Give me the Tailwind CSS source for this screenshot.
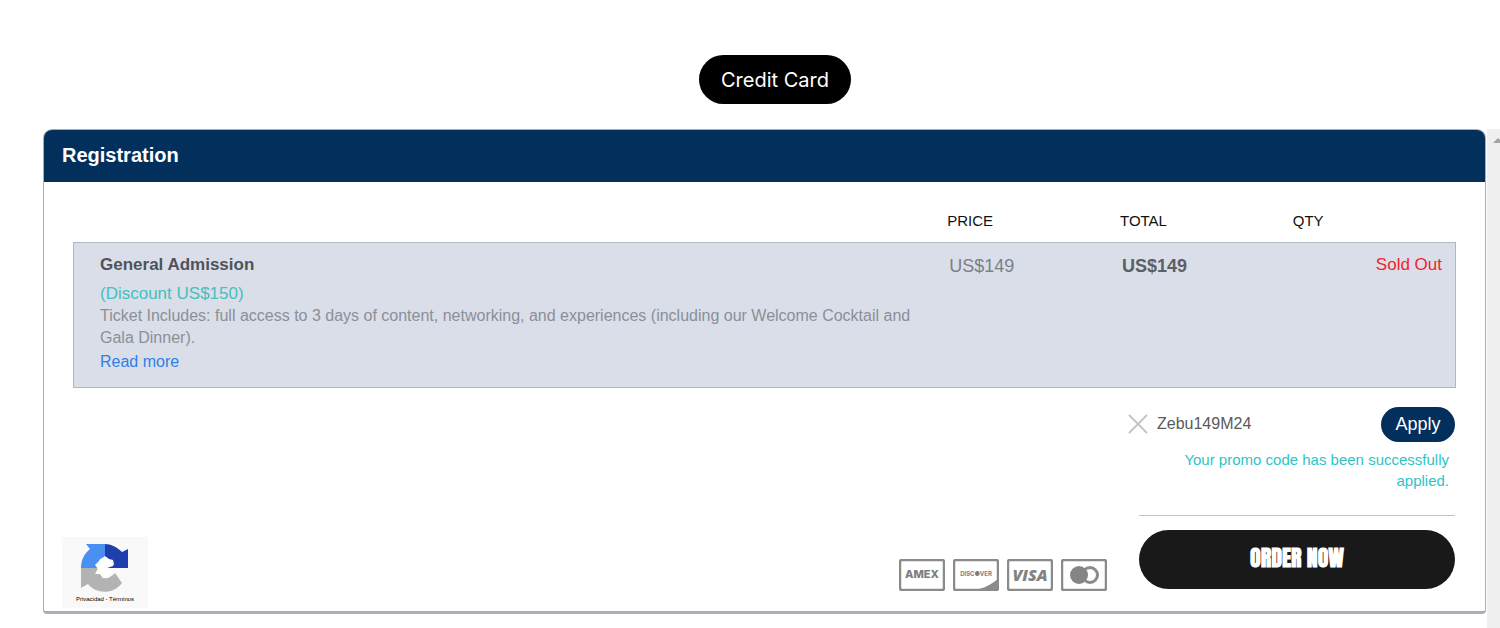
<!DOCTYPE html>
<html lang="en">
<head>
<meta charset="utf-8">
<meta name="viewport" content="width=device-width, initial-scale=1">
<title>Registration</title>
<script src="https://cdn.jsdelivr.net/npm/@tailwindcss/browser@4"></script>
</head>
<body class="flex min-h-screen flex-col bg-white font-['Liberation_Sans',Arial,sans-serif] text-[#5b5f66]">
  <header class="flex justify-center pt-[55px] pb-[25px] pl-[50px]">
    <button type="button" class="h-[49px] rounded-full bg-black px-[22px] font-[Inter,sans-serif] text-[20px] text-white">Credit Card</button>
  </header>

  <div class="flex flex-1">
    <main class="flex-1 pl-[43px]">
      <section class="flex flex-col rounded-t-[9px] rounded-b-[4px] border border-b-[3px] border-[#a9afba]">
        <h1 class="h-[52px] rounded-t-[8px] bg-[#032f5c] pl-[18px] text-[20px] leading-[50px] font-bold text-white">Registration</h1>

        <div class="px-[29px] pt-[18px]">
          <table class="w-full table-fixed border-collapse text-left">
            <thead>
              <tr class="h-[42px] text-[15px] text-[#111]">
                <td class="w-5/8"></td>
                <th scope="col" class="w-1/8 pr-2 pl-[10px] font-normal">PRICE</th>
                <th scope="col" class="w-1/8 pr-2 pl-[10px] font-normal">TOTAL</th>
                <th scope="col" class="w-1/8 pr-2 pl-[10px] font-normal">QTY</th>
              </tr>
            </thead>
            <tbody>
              <tr class="border border-[#b0b6c4] bg-[#dadee8] align-top">
                <td class="py-[10px] pr-5 pl-[26px]">
                  <h2 class="text-[17px] leading-6 font-bold text-[#4f535b]">General Admission</h2>
                  <p class="pt-[6px] text-[17px] leading-[22px] text-[#45bfbf]">(Discount US$150)</p>
                  <p class="text-[16px] leading-[22px] text-[#8b8f98]">Ticket Includes: full access to 3 days of content, networking, and experiences (including our Welcome Cocktail and Gala Dinner).</p>
                  <a href="#more" class="block pb-[2px] text-[16px] leading-[26px] text-[#2f80e8]">Read more</a>
                </td>
                <td class="px-3 py-[11px] text-[18px] leading-6 text-[#7b7f88]">US$149</td>
                <td class="px-3 py-[11px] text-[18px] leading-6 font-bold">US$149</td>
                <td class="px-[13px] py-[10px] text-right text-[17px] leading-6 text-[#f5222d]">Sold Out</td>
              </tr>
            </tbody>
          </table>
        </div>

        <div class="flex items-end pr-[30px] pb-[3px] pl-[18px]">
          <div class="flex h-[71px] w-[86px] flex-col items-center bg-[#f9f9f9] pt-[5px]">
            <svg class="h-[50px] w-[50px] shrink-0" viewBox="0 0 50 50" aria-label="reCAPTCHA">
              <path d="M25 2H6l4 5C4 12 1 18 1 26h17l-2-3 3-3 1-3 5-2z" fill="#4a90f2"/>
              <path d="M25 2c6 0 12 3 17 8l6-3v19H27l2-2 5-2-1-4-4-1-4-2z" fill="#1f3fad"/>
              <path d="M1 26h17l-2 5 4 1 3 4c5 1 8-1 12-5l7 10C32 54 15 51 8 42l-7 4z" fill="#b3b3b3"/>
              <path d="M20 18l5-4 5 4-1 3 5 1-1 2-6 2 5 4-3 5-6 1-3-4-5 0 3-5-3-4z" fill="#fff"/>
            </svg>
            <p class="pt-[3px] text-[6px] leading-[9px] text-black">Privacidad - Términos</p>
          </div>

          <div class="mb-[17px] ml-auto flex gap-2" aria-label="Accepted cards">
            <svg class="h-8 w-[46px]" viewBox="0 0 46 32" aria-label="American Express">
              <rect x="1" y="1" width="44" height="30" rx="2" fill="none" stroke="#8b8b8b" stroke-width="2.500"/>
              <text x="23" y="19" text-anchor="middle" font-family="Inter, sans-serif" font-size="11" font-weight="800" fill="#7d7d7d">AMEX</text>
            </svg>
            <svg class="h-8 w-[46px]" viewBox="0 0 46 32" aria-label="Discover">
              <path d="M45 20v11H22c9-1.500 17-6 23-11z" fill="#8b8b8b"/>
              <rect x="1" y="1" width="44" height="30" rx="2" fill="none" stroke="#8b8b8b" stroke-width="2.500"/>
              <text x="23" y="17" text-anchor="middle" font-family="Inter, sans-serif" font-size="6" font-weight="700" fill="#7d7d7d">DISC●VER</text>
            </svg>
            <svg class="h-8 w-[46px]" viewBox="0 0 46 32" aria-label="Visa">
              <rect x="1" y="1" width="44" height="30" rx="2" fill="none" stroke="#8b8b8b" stroke-width="2.500"/>
              <text x="23" y="22" text-anchor="middle" font-family="Open Sans, sans-serif" font-size="16" font-weight="800" font-style="italic" fill="#828282">VISA</text>
            </svg>
            <svg class="h-8 w-[46px]" viewBox="0 0 46 32" aria-label="Mastercard">
              <rect x="1" y="1" width="44" height="30" rx="2" fill="none" stroke="#8b8b8b" stroke-width="2.500"/>
              <circle cx="29" cy="16" r="7.500" fill="#fff" stroke="#8b8b8b" stroke-width="3"/>
              <circle cx="18" cy="16" r="9" fill="#858585"/>
            </svg>
          </div>

          <div class="ml-8 w-[316px] pt-[19px] pb-[19px]">
            <div class="-ml-[11px] flex items-center">
              <button type="button" aria-label="Remove promo code" class="shrink-0">
                <svg class="h-5 w-5" viewBox="0 0 20 20" fill="none" stroke="#c3c5c8" stroke-width="2"><path d="M1 1l18 18M19 1L1 19"/></svg>
              </button>
              <input type="text" aria-label="Promo code" value="Zebu149M24" class="ml-[9px] min-w-0 flex-1 bg-transparent text-[16px] text-[#5a5a5a] outline-none">
              <button type="button" class="h-[35px] w-[74px] shrink-0 rounded-full bg-[#032f5c] text-[18px] text-white">Apply</button>
            </div>
            <p class="ml-auto w-[280px] pt-[7px] pr-[6px] text-right text-[15px] leading-[21px] text-[#2fc3c8]">Your promo code has been successfully applied.</p>
            <hr class="mt-[24px] mb-[14px] border-[#bfc2c8]">
            <button type="button" class="h-[59px] w-full rounded-full bg-[#191919] pb-1 font-['Anton','Impact','Liberation_Sans_Narrow',sans-serif] text-[22px] font-bold text-white">ORDER NOW</button>
          </div>
        </div>
      </section>
    </main>

    <aside class="ml-px w-[13px] overflow-hidden bg-[#efefef] pt-[9px]" aria-hidden="true">
      <svg class="ml-[6px] h-[5px] w-[10px]" viewBox="0 0 10 5"><path d="M0 5l5-5 5 5z" fill="#a3a3a3"/></svg>
    </aside>
  </div>
</body>
</html>
